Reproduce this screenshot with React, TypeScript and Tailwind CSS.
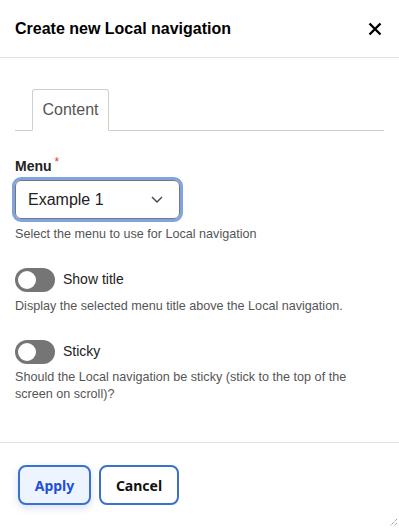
export default function App() {
  return (
    <div className="relative flex h-[528px] w-[399px] flex-col bg-white font-['Liberation_Sans',Arial,sans-serif] text-[#222]">
      {/* header */}
      <div className="flex h-[58px] shrink-0 items-center justify-between border-b border-[#e1e1e1] pl-[15px] pr-[17px]">
        <h1 className="text-[16px] font-bold text-black">Create new Local navigation</h1>
        <svg width="14" height="14" viewBox="0 0 14 14" className="text-black">
          <path d="M1.5 1.5 L12.5 12.5 M12.5 1.5 L1.5 12.5" stroke="currentColor" strokeWidth="2.4" />
        </svg>
      </div>

      {/* body */}
      <div className="flex-1 px-[15px] pt-[31px]">
        <div className="flex border-b border-[#cfcfcf] pl-[17px]">
          <div className="-mb-px flex h-[42px] w-[77px] items-center justify-center rounded-t-[3px] border border-b-white border-[#cfcfcf] bg-white text-[16px] text-[#555]">
            Content
          </div>
        </div>

        <div className="mt-[25px]">
          <div className="flex items-start text-[14px] font-bold text-[#222]">
            Menu<span className="ml-[3px] text-[12px] font-normal leading-none text-[#e0433b]">*</span>
          </div>
          <div className="-ml-[3px] w-[171px] rounded-[9px] border-[3px] border-[#7fa4e0]">
            <div className="flex h-[39px] items-center justify-between rounded-[6px] border border-[#777] bg-white pl-[12px] pr-[16px]">
              <span className="text-[16px] text-[#222]">Example 1</span>
              <svg width="12" height="7" viewBox="0 0 12 7">
                <path d="M1 1 L6 6 L11 1" fill="none" stroke="#444" strokeWidth="1.4" />
              </svg>
            </div>
          </div>
          <p className="mt-[3px] text-[12.6px] text-[#555]">Select the menu to use for Local navigation</p>
        </div>

        <div className="mt-[24px]">
          <div className="flex items-center gap-[8px]">
            <div className="flex h-[24px] w-[40px] items-center rounded-full bg-[#757575] pl-[3px]">
              <div className="h-[18px] w-[18px] rounded-full bg-white" />
            </div>
            <span className="text-[14px] text-[#222]">Show title</span>
          </div>
          <p className="mt-[5px] text-[12.6px] text-[#555]">Display the selected menu title above the Local navigation.</p>
        </div>

        <div className="mt-[24px]">
          <div className="flex items-center gap-[8px]">
            <div className="flex h-[24px] w-[40px] items-center rounded-full bg-[#757575] pl-[3px]">
              <div className="h-[18px] w-[18px] rounded-full bg-white" />
            </div>
            <span className="text-[14px] text-[#222]">Sticky</span>
          </div>
          <p className="mt-[5px] text-[12.6px] leading-[17px] text-[#555]">
            Should the Local navigation be sticky (stick to the top of the screen on scroll)?
          </p>
        </div>
      </div>

      {/* footer */}
      <div className="flex h-[86px] shrink-0 gap-[8px] border-t border-[#e1e1e1] pl-[18px] pt-[22px]">
        <button className="h-[40px] w-[73px] rounded-[8px] border-2 border-[#3a70d0] bg-[#eef4ff] text-[14px] font-bold text-[#1d4fd7] shadow-[0_3px_8px_rgba(60,100,200,0.2)] font-['Noto_Sans',sans-serif]">
          Apply
        </button>
        <button className="h-[40px] w-[80px] rounded-[8px] border-2 border-[#3a70d0] bg-white text-[14px] font-bold text-[#111] font-['Noto_Sans',sans-serif]">
          Cancel
        </button>
      </div>

      <svg width="10" height="10" viewBox="0 0 10 10" className="absolute bottom-[1px] right-[1px]">
        <path d="M9 2 L2 9 M9 6 L6 9" stroke="#777" strokeWidth="1" strokeDasharray="1 1" />
      </svg>
    </div>
  );
}
